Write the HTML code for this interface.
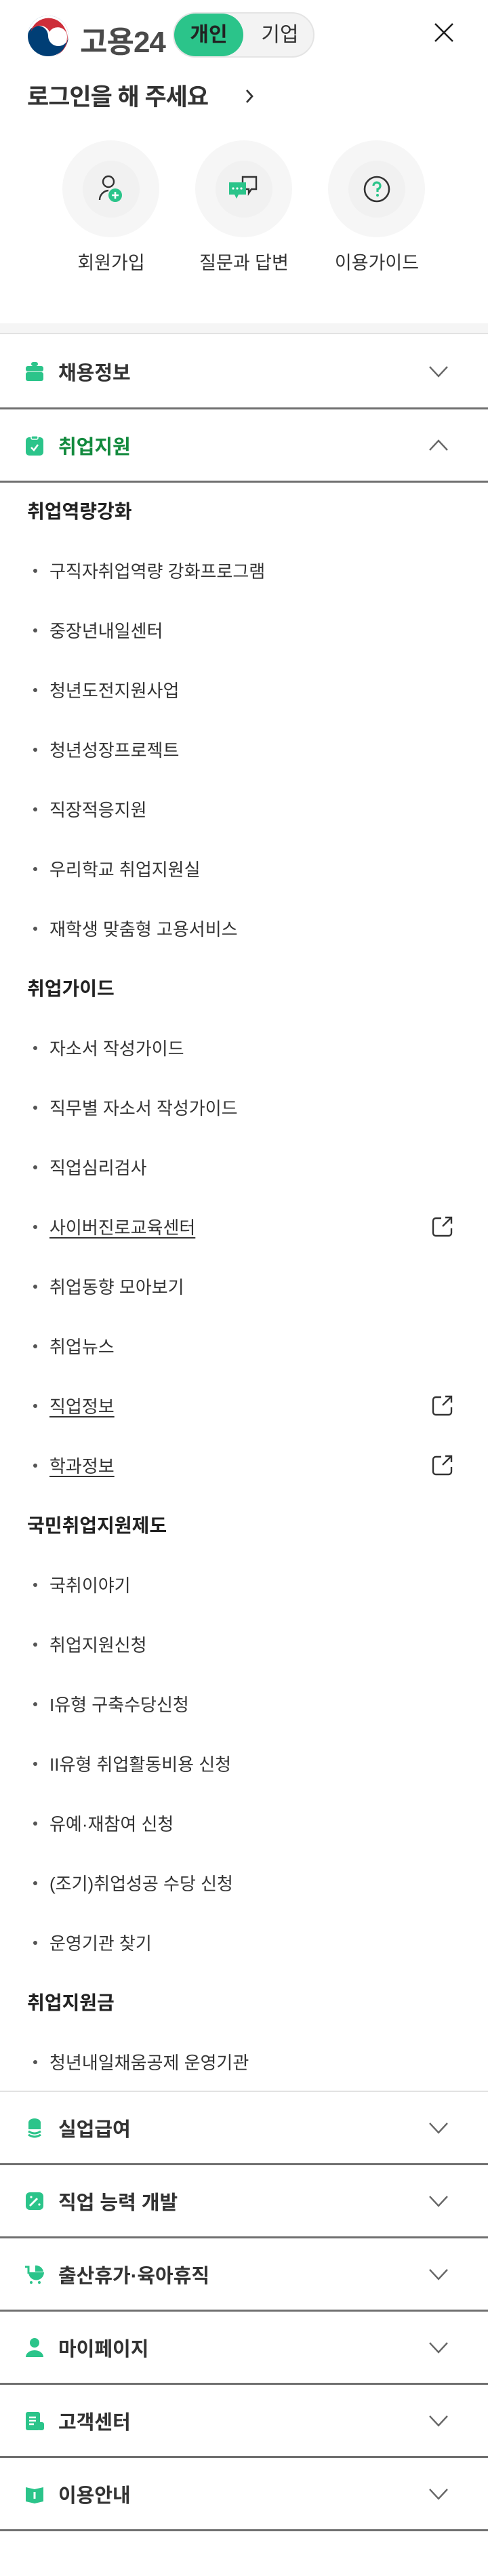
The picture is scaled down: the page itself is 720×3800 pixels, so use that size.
<!DOCTYPE html>
<html><head><meta charset="utf-8"><style>
*{margin:0;padding:0;box-sizing:border-box}
body{width:720px;height:3800px;background:#fff;font-family:"Liberation Sans","Noto Sans CJK KR",sans-serif;color:#333;position:relative;overflow:hidden}
.abs{position:absolute}
.circle{position:absolute;top:207px;width:143px;height:143px;border-radius:50%;background:#f6f6f6;display:flex;align-items:center;justify-content:center}
.circle .in{width:84px;height:84px;border-radius:50%;background:#f1f1f1;display:flex;align-items:center;justify-content:center}
.lbl{position:absolute;top:366px;width:200px;text-align:center;font-size:27px;color:#333}
.menu{position:absolute;left:0;width:720px;border-bottom:3px solid #707070;display:flex;align-items:center}
.menu .t{font-size:29px;font-weight:700;margin-left:0}
.menu .ic{width:30px;height:30px;margin-left:36px;margin-right:20px}
.menu .chev{position:absolute;left:633px;width:28px;height:18px}
.row{height:88px;display:flex;align-items:center;position:relative}
.h{font-size:28px;font-weight:700;padding-left:40px;color:#222}
.it{font-size:26px;padding-left:73px;color:#333}
.it::before{content:"";position:absolute;left:49px;top:42px;width:6px;height:6px;border-radius:50%;background:#555}
.it u{text-underline-offset:5px;text-decoration-thickness:2px}
.ext{position:absolute;left:637px;top:29px;width:31px;height:31px}
</style></head><body>
<svg class="abs" style="left:40px;top:22px" width="62" height="62" viewBox="0 0 62 62">
<circle cx="31" cy="31" r="30" fill="#003e75"/>
<path d="M1 31 A30 30 0 0 1 61 31 A15 15 0 0 1 31 31 A15 15 0 0 0 1 31Z" fill="#fff"/>
<path d="M5 26 A27 27 0 0 1 58 27 A14 14 0 0 0 33 25 A15 15 0 0 0 5 26Z" fill="#cd2e3a"/>
<path d="M56 20 A30 30 0 0 1 42 60 A28 28 0 0 0 56 20Z" fill="#cd2e3a"/>
</svg>
<div class="abs" style="left:118px;top:26px;font-size:44px;font-weight:700;color:#4a4a4a;letter-spacing:-1px">고용24</div>
<div class="abs" style="left:255px;top:18px;width:209px;height:67px;border-radius:34px;background:#f3f3f3;border:2px solid #e4e4e4"></div>
<div class="abs" style="left:257px;top:20px;width:102px;height:63px;border-radius:32px;background:#2bc48a;text-align:center;line-height:63px;font-size:30px;font-weight:700;color:#222">개인</div>
<div class="abs" style="left:368px;top:20px;width:90px;height:63px;text-align:center;line-height:63px;font-size:30px;color:#333">기업</div>
<svg class="abs" style="left:640px;top:33px" width="30" height="30" viewBox="0 0 30 30"><path d="M2 2L28 28M28 2L2 28" stroke="#222" stroke-width="2.6"/></svg>
<div class="abs" style="left:40px;top:115px;font-size:35px;font-weight:700;color:#333;letter-spacing:-1px">로그인을 해 주세요</div>
<svg class="abs" style="left:361px;top:130px" width="14" height="24" viewBox="0 0 14 24"><path d="M3 3L11 12L3 21" stroke="#333" stroke-width="2.8" fill="none"/></svg>
<div class="circle" style="left:92px"><div class="in"><svg width="44" height="44" viewBox="0 0 44 44"><circle cx="18" cy="11" r="8" fill="none" stroke="#333" stroke-width="2.4"/><path d="M5 38 A14 14 0 0 1 18 24" fill="none" stroke="#333" stroke-width="2.4"/><circle cx="28" cy="31" r="10" fill="#2bc48a"/><path d="M28 26V36M23 31H33" stroke="#fff" stroke-width="2.6"/></svg></div></div>
<div class="circle" style="left:288px"><div class="in"><svg width="48" height="44" viewBox="0 0 48 44"><path d="M22 4H42V22H35L31 28V22H22Z" fill="none" stroke="#333" stroke-width="2.4"/><path d="M2 12H27V30H16L13 36L10 30H2Z" fill="#2bc48a"/><circle cx="8" cy="21" r="1.6" fill="#fff"/><circle cx="14" cy="21" r="1.6" fill="#fff"/><circle cx="20" cy="21" r="1.6" fill="#fff"/></svg></div></div>
<div class="circle" style="left:484px"><div class="in"><svg width="42" height="42" viewBox="0 0 42 42"><circle cx="21" cy="21" r="18" fill="none" stroke="#333" stroke-width="2.6"/><path d="M16 16A5 5 0 1 1 22 21V25" fill="none" stroke="#2bc48a" stroke-width="3.2"/><circle cx="22" cy="30" r="2" fill="#2bc48a"/></svg></div></div>
<div class="lbl" style="left:64px">회원가입</div>
<div class="lbl" style="left:260px">질문과 답변</div>
<div class="lbl" style="left:456px">이용가이드</div>
<div class="abs" style="left:0;top:477px;width:720px;height:16px;background:#f5f5f5;border-bottom:2px solid #e2e2e2"></div>

<div class="menu" style="top:495px;height:109px">
<svg class="ic" viewBox="0 0 30 30"><rect x="10" y="1" width="10" height="6" rx="3" fill="#2bc48a"/><rect x="2" y="7" width="26" height="8" rx="3" fill="#2bc48a"/><rect x="2" y="16" width="26" height="13" rx="3" fill="#2bc48a"/></svg>
<span class="t">채용정보</span>
<svg class="chev" viewBox="0 0 28 18"><path d="M1 2L14 16L27 2" stroke="#666" stroke-width="2.4" fill="none"/></svg></div>
<div class="menu" style="top:604px;height:108px">
<svg class="ic" viewBox="0 0 30 30"><rect x="2" y="3" width="26" height="27" rx="5" fill="#2bc48a"/><rect x="10" y="1" width="10" height="5" rx="2" fill="#2bc48a" stroke="#fff" stroke-width="1.5"/><path d="M10 18L14 22L20 14" stroke="#fff" stroke-width="2.6" fill="none"/></svg>
<span class="t" style="color:#138a3e">취업지원</span>
<svg class="chev" viewBox="0 0 28 18"><path d="M1 16L14 2L27 16" stroke="#666" stroke-width="2.4" fill="none"/></svg></div>

<div class="abs" style="top:709px;left:0;width:720px">
<div class="row h">취업역량강화</div>
<div class="row it">구직자취업역량 강화프로그램</div>
<div class="row it">중장년내일센터</div>
<div class="row it">청년도전지원사업</div>
<div class="row it">청년성장프로젝트</div>
<div class="row it">직장적응지원</div>
<div class="row it">우리학교 취업지원실</div>
<div class="row it">재학생 맞춤형 고용서비스</div>
<div class="row h">취업가이드</div>
<div class="row it">자소서 작성가이드</div>
<div class="row it">직무별 자소서 작성가이드</div>
<div class="row it">직업심리검사</div>
<div class="row it"><u>사이버진로교육센터</u><svg class="ext" viewBox="0 0 31 31"><path d="M14 3H6A4 4 0 0 0 2 7V25A4 4 0 0 0 6 29H25A4 4 0 0 0 29 25V18" fill="none" stroke="#333" stroke-width="2.4"/><path d="M16 15L29 2M20 2H29V11" fill="none" stroke="#333" stroke-width="2.4"/></svg></div>
<div class="row it">취업동향 모아보기</div>
<div class="row it">취업뉴스</div>
<div class="row it"><u>직업정보</u><svg class="ext" viewBox="0 0 31 31"><path d="M14 3H6A4 4 0 0 0 2 7V25A4 4 0 0 0 6 29H25A4 4 0 0 0 29 25V18" fill="none" stroke="#333" stroke-width="2.4"/><path d="M16 15L29 2M20 2H29V11" fill="none" stroke="#333" stroke-width="2.4"/></svg></div>
<div class="row it"><u>학과정보</u><svg class="ext" viewBox="0 0 31 31"><path d="M14 3H6A4 4 0 0 0 2 7V25A4 4 0 0 0 6 29H25A4 4 0 0 0 29 25V18" fill="none" stroke="#333" stroke-width="2.4"/><path d="M16 15L29 2M20 2H29V11" fill="none" stroke="#333" stroke-width="2.4"/></svg></div>
<div class="row h">국민취업지원제도</div>
<div class="row it">국취이야기</div>
<div class="row it">취업지원신청</div>
<div class="row it">I유형 구축수당신청</div>
<div class="row it">II유형 취업활동비용 신청</div>
<div class="row it">유예·재참여 신청</div>
<div class="row it">(조기)취업성공 수당 신청</div>
<div class="row it">운영기관 찾기</div>
<div class="row h">취업지원금</div>
<div class="row it">청년내일채움공제 운영기관</div>
</div>
<div class="abs" style="left:0;top:3084px;width:720px;height:2px;background:#e2e2e2"></div>

<div class="menu" style="top:3086px;height:108px">
<svg class="ic" viewBox="0 0 30 30"><ellipse cx="15" cy="7" rx="9" ry="6" fill="#2bc48a"/><rect x="6" y="7" width="18" height="10" fill="#2bc48a"/><path d="M6 20Q15 26 24 20M6 25Q15 31 24 25" stroke="#2bc48a" stroke-width="3" fill="none"/></svg>
<span class="t">실업급여</span>
<svg class="chev" viewBox="0 0 28 18"><path d="M1 2L14 16L27 2" stroke="#666" stroke-width="2.4" fill="none"/></svg></div>
<div class="menu" style="top:3194px;height:108px">
<svg class="ic" viewBox="0 0 30 30"><rect x="2" y="2" width="26" height="26" rx="6" fill="#2bc48a"/><path d="M8 22L19 11" stroke="#fff" stroke-width="3"/><circle cx="10" cy="9" r="1.6" fill="#fff"/><circle cx="22" cy="20" r="1.6" fill="#fff"/></svg>
<span class="t">직업 능력 개발</span>
<svg class="chev" viewBox="0 0 28 18"><path d="M1 2L14 16L27 2" stroke="#666" stroke-width="2.4" fill="none"/></svg></div>
<div class="menu" style="top:3302px;height:108px">
<svg class="ic" viewBox="0 0 30 30"><path d="M1 4H6V14" stroke="#2bc48a" stroke-width="3" fill="none"/><path d="M6 12H29A11 11 0 0 1 6 12Z" fill="#2bc48a"/><path d="M16 2A11 11 0 0 1 28 11H16Z" fill="#2bc48a"/><circle cx="10" cy="27" r="2" fill="#2bc48a"/><circle cx="22" cy="27" r="2" fill="#2bc48a"/></svg>
<span class="t">출산휴가·육아휴직</span>
<svg class="chev" viewBox="0 0 28 18"><path d="M1 2L14 16L27 2" stroke="#666" stroke-width="2.4" fill="none"/></svg></div>
<div class="menu" style="top:3410px;height:108px">
<svg class="ic" viewBox="0 0 30 30"><circle cx="15" cy="8" r="7" fill="#2bc48a"/><path d="M2 29A13 10 0 0 1 28 29Z" fill="#2bc48a"/></svg>
<span class="t">마이페이지</span>
<svg class="chev" viewBox="0 0 28 18"><path d="M1 2L14 16L27 2" stroke="#666" stroke-width="2.4" fill="none"/></svg></div>
<div class="menu" style="top:3518px;height:108px">
<svg class="ic" viewBox="0 0 30 30"><rect x="2" y="2" width="21" height="27" rx="3" fill="#2bc48a"/><rect x="20" y="17" width="9" height="12" rx="3" fill="#2bc48a"/><path d="M7 10H17M7 15H17M7 20H14" stroke="#fff" stroke-width="2.4"/></svg>
<span class="t">고객센터</span>
<svg class="chev" viewBox="0 0 28 18"><path d="M1 2L14 16L27 2" stroke="#666" stroke-width="2.4" fill="none"/></svg></div>
<div class="menu" style="top:3626px;height:108px">
<svg class="ic" viewBox="0 0 30 30"><path d="M2 5L15 8L28 5V26L15 29L2 26Z" fill="#2bc48a"/><rect x="13.5" y="12" width="3" height="10" fill="#fff"/></svg>
<span class="t">이용안내</span>
<svg class="chev" viewBox="0 0 28 18"><path d="M1 2L14 16L27 2" stroke="#666" stroke-width="2.4" fill="none"/></svg></div>
</body></html>
